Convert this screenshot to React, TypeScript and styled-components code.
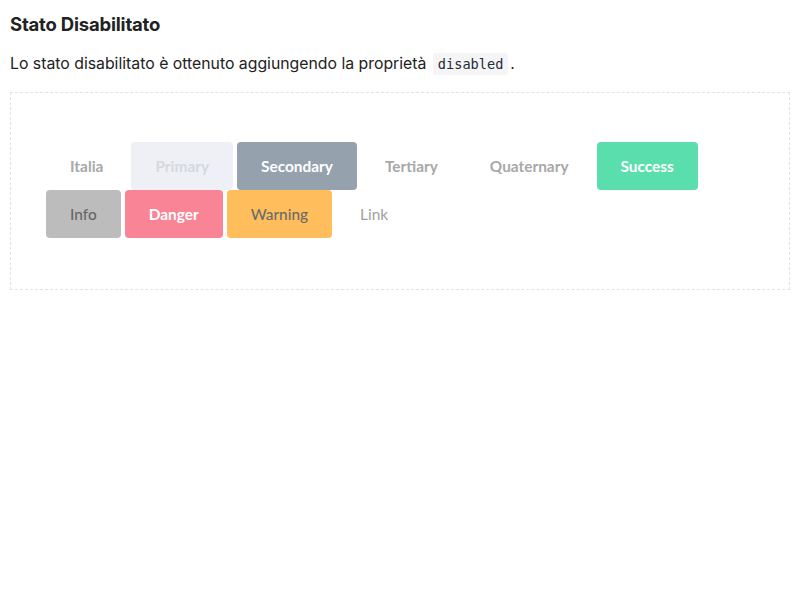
import React from "react";
import styled, { createGlobalStyle, css } from "styled-components";

const Global = createGlobalStyle`
  html, body { margin: 0; padding: 0; background: #fff; }
  body { font-family: Inter, "Noto Sans", sans-serif; color: #1a1a1a; }
`;

const Page = styled.div`
  padding: 10px 10px;
`;

const Title = styled.h3`
  margin: 2px 0 0 0;
  font-family: Inter, sans-serif;
  font-size: 18.5px;
  font-weight: 700;
  line-height: 24px;
  letter-spacing: -0.2px;
  color: #222;
`;

const Text = styled.p`
  margin: 17px 0 17px 0;
  font-size: 15.8px;
  line-height: 22px;
  color: #222;
`;

const Code = styled.code`
  font-family: "DejaVu Sans Mono", monospace;
  font-size: 13.6px;
  background: #f5f5f5;
  color: #1d2b3a;
  padding: 3px 5px;
  border-radius: 3px;
  margin: 0 2px;
`;

const Demo = styled.div`
  border: 1px dashed #e3e3e3;
  padding: 49px 40px 51px 35px;
  display: flex;
  flex-wrap: wrap;
  align-content: flex-start;
  row-gap: 0;
`;

type Variant =
  | "italia"
  | "primary"
  | "secondary"
  | "tertiary"
  | "quaternary"
  | "success"
  | "info"
  | "danger"
  | "warning"
  | "link";

const variants: Record<Variant, ReturnType<typeof css>> = {
  italia: css`background: transparent; color: #a8a8a8;`,
  primary: css`background: #eef0f5; color: #d5d8de;`,
  secondary: css`background: #95a1ad; color: #fff;`,
  tertiary: css`background: transparent; color: #a8a8a8;`,
  quaternary: css`background: transparent; color: #a8a8a8;`,
  success: css`background: #5bdeae; color: #fff;`,
  info: css`background: #bcbcbc; color: #676767; font-weight: 500;`,
  danger: css`background: #f88496; color: #fff;`,
  warning: css`background: #ffbd5b; color: #6b6b6b; font-weight: 500;`,
  link: css`background: transparent; color: #a0a0a0; font-weight: 400;`,
};

const Button = styled.button<{ $variant: Variant }>`
  height: 48px;
  padding: 0 24px;
  margin: 0 4px 0 0;
  border: none;
  border-radius: 4px;
  font-family: Lato, "Open Sans", sans-serif;
  font-size: 15.4px;
  font-weight: 700;
  cursor: not-allowed;
  display: inline-flex;
  align-items: center;
  justify-content: center;
  ${(p) => variants[p.$variant]}
`;

const buttons: { label: string; v: Variant }[] = [
  { label: "Italia", v: "italia" },
  { label: "Primary", v: "primary" },
  { label: "Secondary", v: "secondary" },
  { label: "Tertiary", v: "tertiary" },
  { label: "Quaternary", v: "quaternary" },
  { label: "Success", v: "success" },
  { label: "Info", v: "info" },
  { label: "Danger", v: "danger" },
  { label: "Warning", v: "warning" },
  { label: "Link", v: "link" },
];

export default function App() {
  return (
    <>
      <Global />
      <Page>
        <Title>Stato Disabilitato</Title>
        <Text>
          Lo stato disabilitato è ottenuto aggiungendo la proprietà <Code>disabled</Code>.
        </Text>
        <Demo>
          {buttons.map((b) => (
            <Button key={b.label} $variant={b.v} disabled>
              {b.label}
            </Button>
          ))}
        </Demo>
      </Page>
    </>
  );
}
